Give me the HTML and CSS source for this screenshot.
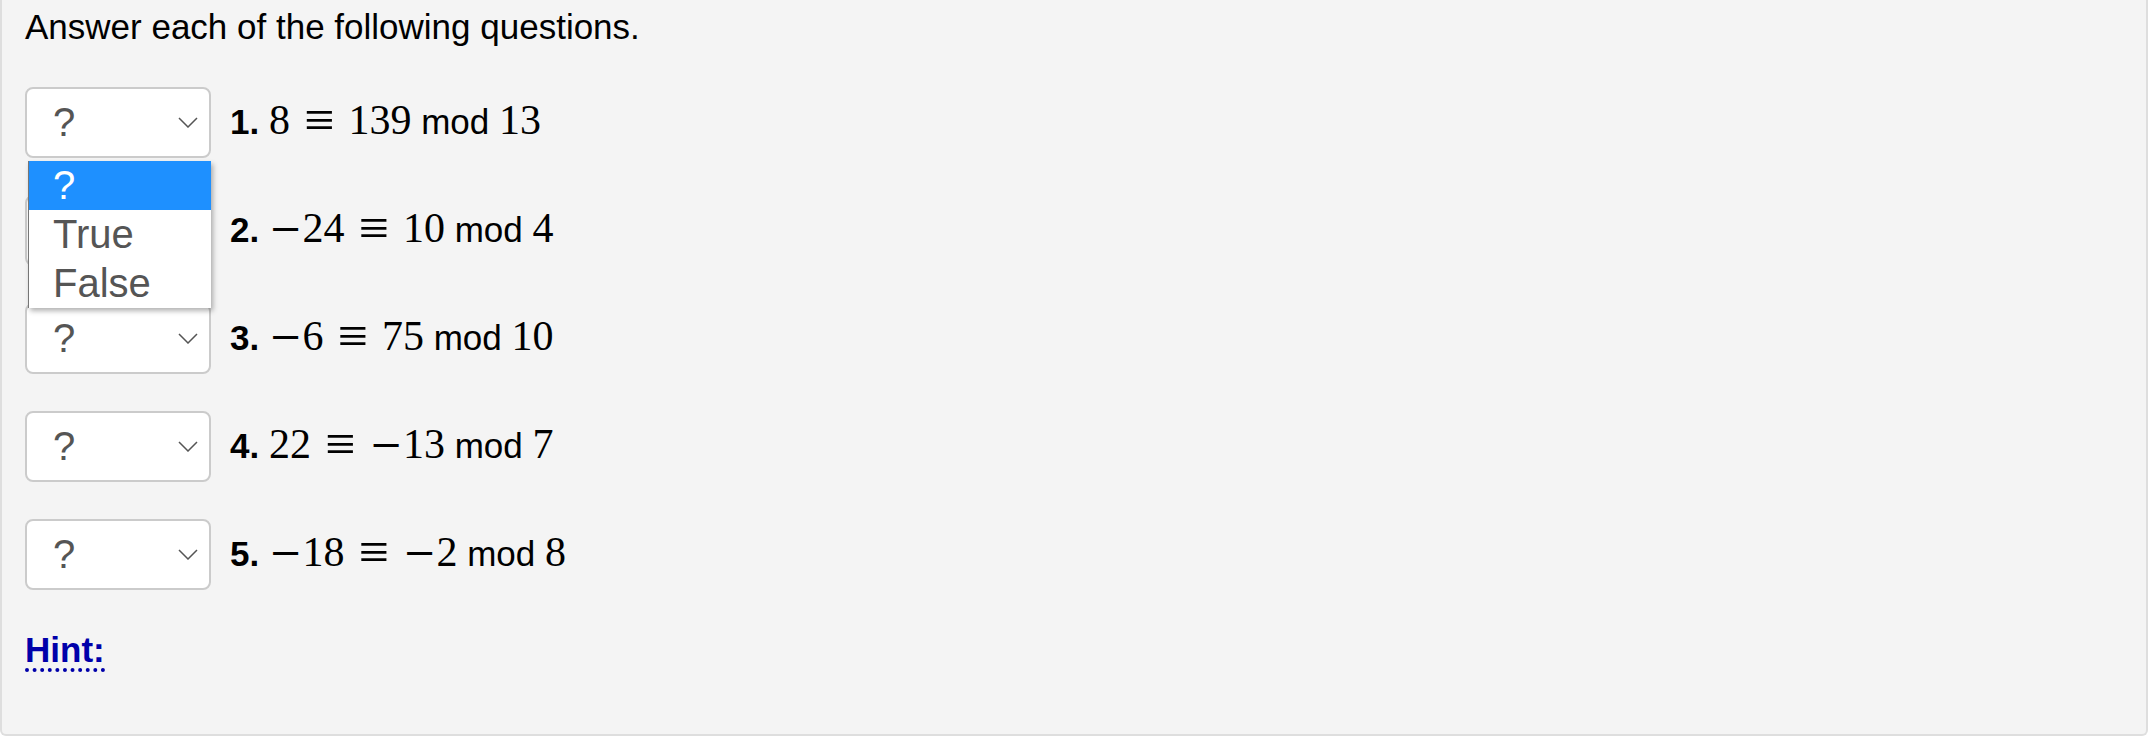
FILE: index.html
```html
<!DOCTYPE html>
<html>
<head>
    <title>Modular congruences</title>
    <link rel="stylesheet" href="styles.css">
</head>
<body>
    <div class="panel">
        <p class="lead">Answer each of the following questions.</p>

        <!-- Question rows -->
        <div class="q">
            <div class="pick">
                <div class="select"><span>?</span><svg class="chev" width="20" height="11" viewBox="0 0 20 11"><polyline points="1,1 10,10 19,1" /></svg></div>
                <!-- open list of the first select -->
                <div class="options">
                    <div class="opt active">?</div>
                    <div class="opt">True</div>
                    <div class="opt">False</div>
                </div>
            </div>
            <div class="stmt"><b>1.</b> <span class="m">8<span class="rel">≡</span>139</span> mod <span class="m">13</span></div>
        </div>

        <div class="q">
            <div class="pick">
                <div class="select"><span>?</span><svg class="chev" width="20" height="11" viewBox="0 0 20 11"><polyline points="1,1 10,10 19,1" /></svg></div>
            </div>
            <div class="stmt"><b>2.</b> <span class="m"><span class="neg">−</span>24<span class="rel">≡</span>10</span> mod <span class="m">4</span></div>
        </div>

        <div class="q">
            <div class="pick">
                <div class="select"><span>?</span><svg class="chev" width="20" height="11" viewBox="0 0 20 11"><polyline points="1,1 10,10 19,1" /></svg></div>
            </div>
            <div class="stmt"><b>3.</b> <span class="m"><span class="neg">−</span>6<span class="rel">≡</span>75</span> mod <span class="m">10</span></div>
        </div>

        <div class="q">
            <div class="pick">
                <div class="select"><span>?</span><svg class="chev" width="20" height="11" viewBox="0 0 20 11"><polyline points="1,1 10,10 19,1" /></svg></div>
            </div>
            <div class="stmt"><b>4.</b> <span class="m">22<span class="rel">≡</span><span class="neg">−</span>13</span> mod <span class="m">7</span></div>
        </div>

        <div class="q">
            <div class="pick">
                <div class="select"><span>?</span><svg class="chev" width="20" height="11" viewBox="0 0 20 11"><polyline points="1,1 10,10 19,1" /></svg></div>
            </div>
            <div class="stmt"><b>5.</b> <span class="m"><span class="neg">−</span>18<span class="rel">≡</span><span class="neg">−</span>2</span> mod <span class="m">8</span></div>
        </div>

        <div class="hint"><span>Hint:</span></div>
    </div>
</body>
</html>
```

FILE: styles.css
```css
body { margin: 0; background: #fff; font-family: "Liberation Sans", Arial, sans-serif; color: #000; }

.panel {
    margin-right: 7px;
    padding: 7px 0 62px 23px;
    background-color: #f4f4f4;
    border: 2px solid #dedede;
    border-top: none;
    border-radius: 0 0 6px 6px;
}

.lead { margin: 0; font-size: 35px; line-height: 40px; }

.q { display: flex; align-items: flex-start; gap: 19px; margin-top: 37px; }
.lead + .q { margin-top: 40px; }

.pick { position: relative; }

.select {
    box-sizing: border-box;
    width: 186px;
    height: 71px;
    display: flex;
    align-items: center;
    justify-content: space-between;
    padding: 0 11px 0 26px;
    background: #fff;
    border: 2px solid #cbcbcb;
    border-radius: 8px;
    font-size: 40px;
    color: #555;
}
.chev polyline { fill: none; stroke: #555; stroke-width: 1.5; }

.options {
    position: absolute;
    top: 74px;
    left: 3px;
    right: 0;
    background: #fff;
    border-left: 1px solid #767676;
    box-shadow: 2px 3px 5px rgba(0, 0, 0, 0.3);
    z-index: 2;
}
.opt { height: 49px; line-height: 49px; padding-left: 24px; font-size: 40px; color: #555; }
.opt.active { background-color: #1e90ff; color: #fff; }

.stmt { padding-top: 8px; font-size: 35px; line-height: 50px; white-space: nowrap; }
.m { font-family: "Liberation Serif", "Times New Roman", serif; font-size: 42px; }
.neg { font-family: "DejaVu Serif", serif; font-size: 40px; line-height: 0; }
.rel { margin: 0 14px; font-size: 54px; line-height: 0; vertical-align: -4px; }

.hint { margin-top: 40px; font-size: 35px; font-weight: bold; line-height: 40px; color: #0000aa; }
.hint span { display: inline-block; line-height: 37px; border-bottom: 4px dotted #0000aa; }
```
